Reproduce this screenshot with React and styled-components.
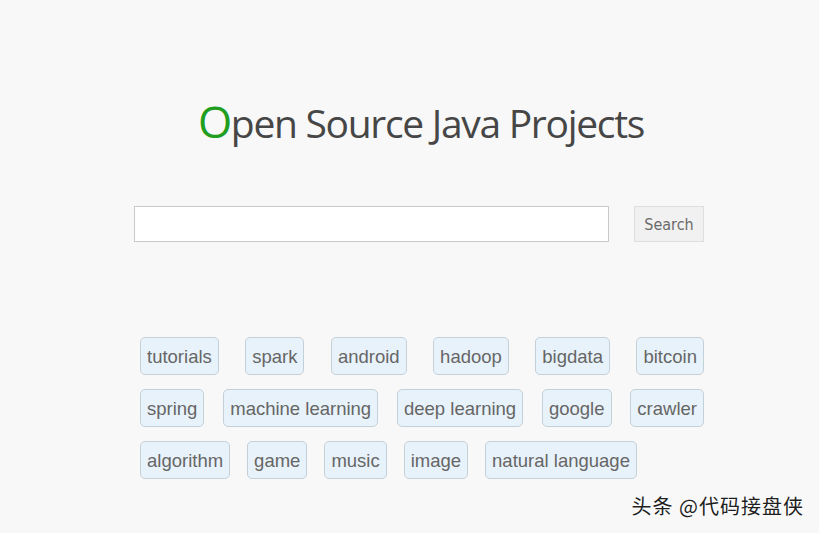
import React from "react";
import styled, { createGlobalStyle } from "styled-components";

const Global = createGlobalStyle`
  html, body { margin: 0; padding: 0; }
  body {
    background: #f8f8f8;
    width: 819px;
    height: 533px;
    overflow: hidden;
    position: relative;
  }
`;

const Page = styled.main`
  width: 570px;
  margin-left: 134px;
  padding-top: 96px;
  display: flex;
  flex-direction: column;
`;

const Title = styled.h1`
  margin: 0 0 0 4px;
  text-align: center;
  font-family: "Open Sans", "Noto Sans", sans-serif;
  font-weight: 400;
  font-size: 39px;
  letter-spacing: -1.3px;
  line-height: 54px;
  color: #464646;
`;

const Initial = styled.span`
  color: #1f9e1f;
  font-size: 44px;
  line-height: 1;
`;

const SearchRow = styled.form`
  margin-top: 56px;
  display: flex;
  align-items: stretch;
  gap: 25px;
  height: 36px;
`;

const SearchInput = styled.input`
  flex: 0 0 475px;
  box-sizing: border-box;
  height: 36px;
  border: 1px solid #c9c9c9;
  background: #fff;
  outline: none;
  padding: 0 8px;
  font-family: "Liberation Sans", sans-serif;
  font-size: 16px;
`;

const SearchButton = styled.button`
  flex: 0 0 70px;
  box-sizing: border-box;
  height: 36px;
  border: 1px solid #dedede;
  background: #f1f1f1;
  color: #6a6a6a;
  font-family: "DejaVu Sans", sans-serif;
  font-stretch: condensed;
  font-size: 16px;
  padding: 0;
`;

const Tags = styled.section`
  margin-top: 95px;
  margin-left: 6px;
  width: 564px;
  display: flex;
  flex-direction: column;
  gap: 14px;
`;

const TagRow = styled.div`
  display: flex;
  justify-content: ${(p) => (p.$fill ? "space-between" : "flex-start")};
  gap: 17px;
`;

const Tag = styled.a`
  box-sizing: border-box;
  height: 38px;
  padding: 2px 6px 0;
  display: inline-flex;
  align-items: center;
  border: 1px solid #c4d0d8;
  border-radius: 5px;
  background: #e8f2fa;
  color: #666;
  font-family: "Liberation Sans", Arial, sans-serif;
  font-size: 18.5px;
  text-decoration: none;
  white-space: nowrap;
`;

const Watermark = styled.div`
  position: absolute;
  right: 15px;
  bottom: 13px;
  font-family: "Noto Sans CJK SC", sans-serif;
  font-size: 20px;
  color: #1e1e1e;
  text-shadow: 0 0 2px #fff, 0 0 2px #fff;
  letter-spacing: 1px;
`;

const rows = [
  { fill: true, tags: ["tutorials", "spark", "android", "hadoop", "bigdata", "bitcoin"] },
  { fill: true, tags: ["spring", "machine learning", "deep learning", "google", "crawler"] },
  { fill: false, tags: ["algorithm", "game", "music", "image", "natural language"] },
];

export default function App() {
  return (
    <>
      <Global />
      <Page>
        <Title>
          <Initial>O</Initial>pen Source Java Projects
        </Title>
        <SearchRow onSubmit={(e) => e.preventDefault()}>
          <SearchInput type="text" />
          <SearchButton type="submit">Search</SearchButton>
        </SearchRow>
        <Tags>
          {rows.map((r, i) => (
            <TagRow key={i} $fill={r.fill}>
              {r.tags.map((t) => (
                <Tag key={t} href="#">{t}</Tag>
              ))}
            </TagRow>
          ))}
        </Tags>
      </Page>
      <Watermark>头条 @代码接盘侠</Watermark>
    </>
  );
}
